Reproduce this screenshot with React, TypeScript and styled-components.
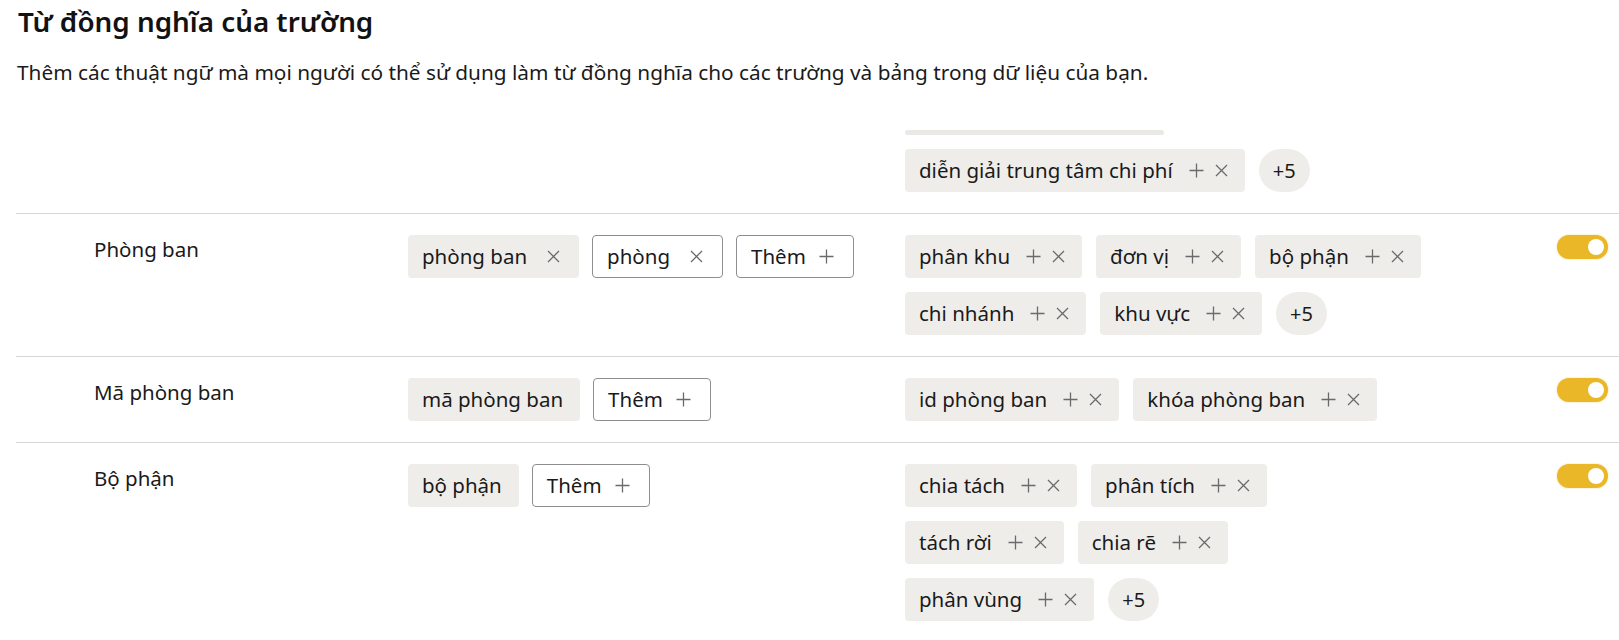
import React from 'react';
import styled, { createGlobalStyle } from 'styled-components';

const GlobalStyle = createGlobalStyle`
  body {
    margin: 0;
    background: #ffffff;
    font-family: 'Noto Sans', 'Open Sans', sans-serif;
    color: #1a1a1a;
  }
`;

const Page = styled.div`
  padding: 4px 0 0 16px;
`;

const Title = styled.h1`
  margin: 0 0 0 2px;
  font-size: 27.8px;
  line-height: 34px;
  font-weight: 600;
  color: #121212;
`;

const Subtitle = styled.p`
  margin: 20px 0 0 1px;
  font-size: 20.8px;
  line-height: 28px;
  color: #1a1a1a;
`;

const Table = styled.div`
  margin-top: 44px;
`;

const Row = styled.div<{ $divided?: boolean }>`
  display: grid;
  grid-template-columns: 392px 497px 1fr auto;
  align-items: start;
  padding: ${(p) => (p.$divided ? '21px 11px 21px 0' : '0 11px 21px 0')};
  border-top: ${(p) => (p.$divided ? '1px solid #d6d6d6' : 'none')};
`;

const Label = styled.div`
  padding-left: 78px;
  font-size: 20.5px;
  line-height: 28px;
  color: #1a1a1a;
`;

const ChipLine = styled.div<{ $gap: number }>`
  display: flex;
  gap: ${(p) => p.$gap}px;
`;

const ChipStack = styled.div`
  display: flex;
  flex-direction: column;
  gap: 14px;
`;

const Chip = styled.div<{ $outlined?: boolean; $rightPad?: number }>`
  box-sizing: border-box;
  height: 43px;
  display: inline-flex;
  align-items: center;
  padding: 0 ${(p) => p.$rightPad ?? 17}px 1px 14px;
  border-radius: 4px;
  background: ${(p) => (p.$outlined ? '#ffffff' : '#efedea')};
  border: ${(p) => (p.$outlined ? '1px solid #8e8e8e' : 'none')};
  font-size: 20.5px;
  color: #1a1a1a;
  white-space: nowrap;
`;

const ChipIcons = styled.span<{ $lead: number }>`
  display: inline-flex;
  align-items: center;
  gap: 11px;
  margin-left: ${(p) => p.$lead}px;
  color: #6a6a6a;
`;

const More = styled.div`
  width: 51px;
  height: 43px;
  border-radius: 22px;
  background: #efedea;
  display: flex;
  align-items: center;
  justify-content: center;
  font-size: 20px;
  color: #1a1a1a;
`;

const Bar = styled.div`
  width: 259px;
  height: 5px;
  border-radius: 3px;
  background: #ebe9e6;
  margin-bottom: 14px;
`;

const Toggle = styled.div`
  box-sizing: border-box;
  width: 51px;
  height: 24px;
  border-radius: 12px;
  background: #e9b728;
  box-shadow: 0 0 2px rgba(233, 183, 40, 0.6);
  display: flex;
  align-items: center;
  justify-content: flex-end;
  padding-right: 4px;
`;

const Knob = styled.span`
  width: 16px;
  height: 16px;
  border-radius: 50%;
  background: #ffffff;
`;

const PlusIcon = () => (
  <svg width="15" height="15" viewBox="0 0 15 15" fill="none" stroke="currentColor" strokeWidth="1.3">
    <path d="M7.5 0.5v14M0.5 7.5h14" />
  </svg>
);

const CloseIcon = () => (
  <svg width="13" height="13" viewBox="0 0 13 13" fill="none" stroke="currentColor" strokeWidth="1.3">
    <path d="M1 1l11 11M12 1L1 12" />
  </svg>
);

type Synonym = { text: string; outlined?: boolean };

function SuggestChip({ text }: { text: string }) {
  return (
    <Chip>
      {text}
      <ChipIcons $lead={16}>
        <PlusIcon />
        <CloseIcon />
      </ChipIcons>
    </Chip>
  );
}

// suggestions are split into lines the way the panel wraps them
function Suggestions({ lines, more }: { lines: string[][]; more?: boolean }) {
  return (
    <ChipStack>
      {lines.map((line, i) => (
        <ChipLine $gap={14} key={i}>
          {line.map((s) => (
            <SuggestChip key={s} text={s} />
          ))}
          {more && i === lines.length - 1 && <More>+5</More>}
        </ChipLine>
      ))}
    </ChipStack>
  );
}

function AddButton() {
  return (
    <Chip $outlined $rightPad={19}>
      Thêm
      <ChipIcons $lead={13}>
        <PlusIcon />
      </ChipIcons>
    </Chip>
  );
}

function SynonymChips({ items }: { items: Synonym[] }) {
  const removable = items.length > 1;
  return (
    <ChipLine $gap={13}>
      {items.map((it) =>
        removable ? (
          <Chip key={it.text} $outlined={it.outlined} $rightPad={19}>
            {it.text}
            <ChipIcons $lead={20}>
              <CloseIcon />
            </ChipIcons>
          </Chip>
        ) : (
          <Chip key={it.text} $rightPad={17}>
            {it.text}
          </Chip>
        )
      )}
      <AddButton />
    </ChipLine>
  );
}

const rows = [
  {
    label: 'Phòng ban',
    synonyms: [{ text: 'phòng ban' }, { text: 'phòng', outlined: true }],
    lines: [
      ['phân khu', 'đơn vị', 'bộ phận'],
      ['chi nhánh', 'khu vực'],
    ],
    more: true,
  },
  {
    label: 'Mã phòng ban',
    synonyms: [{ text: 'mã phòng ban' }],
    lines: [['id phòng ban', 'khóa phòng ban']],
    more: false,
  },
  {
    label: 'Bộ phận',
    synonyms: [{ text: 'bộ phận' }],
    lines: [
      ['chia tách', 'phân tích'],
      ['tách rời', 'chia rẽ'],
      ['phân vùng'],
    ],
    more: true,
  },
];

export default function App() {
  return (
    <Page>
      <GlobalStyle />
      <Title>Từ đồng nghĩa của trường</Title>
      <Subtitle>
        Thêm các thuật ngữ mà mọi người có thể sử dụng làm từ đồng nghĩa cho các trường và bảng trong dữ liệu của bạn.
      </Subtitle>
      <Table>
        <Row>
          <div />
          <div />
          <div>
            <Bar />
            <Suggestions lines={[['diễn giải trung tâm chi phí']]} more />
          </div>
          <div />
        </Row>
        {rows.map((r) => (
          <Row $divided key={r.label}>
            <Label>{r.label}</Label>
            <SynonymChips items={r.synonyms} />
            <Suggestions lines={r.lines} more={r.more} />
            <Toggle>
              <Knob />
            </Toggle>
          </Row>
        ))}
      </Table>
    </Page>
  );
}
